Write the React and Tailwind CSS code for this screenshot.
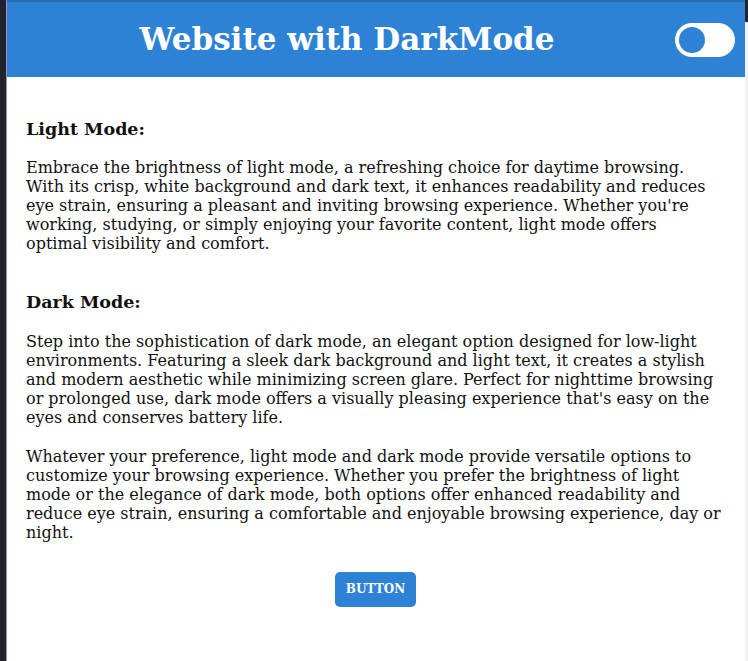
export default function App() {
  const serif = { fontFamily: '"DejaVu Serif", serif' };
  return (
    <div className="flex h-[661px] w-[748px] overflow-hidden bg-white" style={serif}>
      <div className="w-[6px] shrink-0 bg-[#23232e]" />
      <div className="w-px shrink-0 bg-[#a78bdb]" />
      <div className="flex min-w-0 flex-1 flex-col">
        <header className="flex h-[77px] shrink-0 items-center border-t-2 border-[#2a6bb0] bg-[#2d82d6] pl-[20px] pr-[10px]">
          <h1 className="flex-1 pr-[8px] text-center text-[31px] font-bold leading-none text-white">Website with DarkMode</h1>
          <button className="flex h-[34px] w-[60px] items-center rounded-full bg-white pl-[4px]">
            <span className="h-[26px] w-[26px] rounded-full bg-[#2d82d6]" />
          </button>
        </header>
        <main className="flex flex-col pl-[19px] pr-[24px] pt-[41px] text-[16px] leading-[19px] text-[#111]">
          <h2 className="text-[17.5px] font-bold leading-[22px]">Light Mode:</h2>
          <p className="mt-[18px]">
            Embrace the brightness of light mode, a refreshing choice for daytime browsing. With its crisp, white background and dark text, it enhances readability and reduces eye strain, ensuring a pleasant and inviting browsing experience. Whether you're working, studying, or simply enjoying your favorite content, light mode offers optimal visibility and comfort.
          </p>
          <h2 className="mt-[38px] text-[17.5px] font-bold leading-[22px]">Dark Mode:</h2>
          <p className="mt-[19px]">
            Step into the sophistication of dark mode, an elegant option designed for low-light environments. Featuring a sleek dark background and light text, it creates a stylish and modern aesthetic while minimizing screen glare. Perfect for nighttime browsing or prolonged use, dark mode offers a visually pleasing experience that's easy on the eyes and conserves battery life.
          </p>
          <p className="mt-[20px]">
            Whatever your preference, light mode and dark mode provide versatile options to customize your browsing experience. Whether you prefer the brightness of light mode or the elegance of dark mode, both options offer enhanced readability and reduce eye strain, ensuring a comfortable and enjoyable browsing experience, day or night.
          </p>
          <div className="mt-[30px] flex justify-center pl-[4px]">
            <button className="h-[35px] rounded-[5px] bg-[#2d82d6] px-[11px] text-[12px] font-bold text-white">BUTTON</button>
          </div>
        </main>
      </div>
      <div className="flex w-[3px] shrink-0 flex-col bg-[#f3f3f5]">
        <div className="h-[22px] bg-[#23232e]" />
      </div>
    </div>
  );
}
